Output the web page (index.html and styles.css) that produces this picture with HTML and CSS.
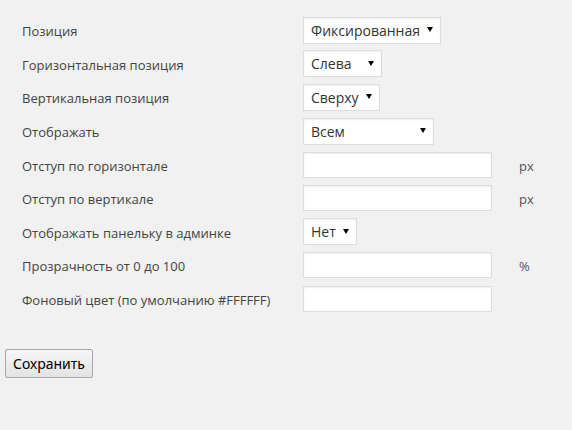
FILE: index.html
```
<!DOCTYPE html>
<html lang="ru">
<head>
<meta charset="utf-8">
<link rel="stylesheet" href="styles.css">
</head>
<body>
<form class="page">
  <div class="form-grid">
    <label class="lbl">Позиция</label>
    <div class="ctl"><span class="sel w138">Фиксированная</span></div>
    <span class="unit"></span>

    <label class="lbl">Горизонтальная позиция</label>
    <div class="ctl"><span class="sel w79">Слева</span></div>
    <span class="unit"></span>

    <label class="lbl">Вертикальная позиция</label>
    <div class="ctl"><span class="sel w77">Сверху</span></div>
    <span class="unit"></span>

    <label class="lbl">Отображать</label>
    <div class="ctl"><span class="sel w131">Всем</span></div>
    <span class="unit"></span>

    <label class="lbl">Отступ по горизонтале</label>
    <div class="ctl"><input class="txt" type="text"></div>
    <span class="unit">px</span>

    <label class="lbl">Отступ по вертикале</label>
    <div class="ctl"><input class="txt" type="text"></div>
    <span class="unit">px</span>

    <label class="lbl">Отображать панельку в админке</label>
    <div class="ctl"><span class="sel w54">Нет</span></div>
    <span class="unit"></span>

    <label class="lbl">Прозрачность от 0 до 100</label>
    <div class="ctl"><input class="txt" type="text"></div>
    <span class="unit">%</span>

    <label class="lbl">Фоновый цвет (по умолчанию #FFFFFF)</label>
    <div class="ctl"><input class="txt" type="text"></div>
    <span class="unit"></span>
  </div>
  <div class="actions">
    <button class="btn" type="button">Сохранить</button>
  </div>
</form>
</body>
</html>
```
FILE: styles.css
```
html, body {
  margin: 0;
  padding: 0;
  background: #f1f1f1;
}
body {
  font-family: "Open Sans", "Noto Sans", sans-serif;
  font-size: 13px;
  color: #444;
  width: 572px;
  height: 430px;
  overflow: hidden;
}
.page {
  padding: 17px 0 0 0;
}
.form-grid {
  display: grid;
  grid-template-columns: 303px 216px auto;
  grid-auto-rows: 26.6px;
  row-gap: 7px;
  align-items: center;
}
.lbl {
  padding: 2px 0 0 22px;
  line-height: 18px;
}
.ctl {
  display: flex;
  align-items: center;
  height: 100%;
}
.sel {
  position: relative;
  box-sizing: border-box;
  height: 27px;
  display: flex;
  align-items: center;
  padding-left: 7px;
  background: #fff;
  border: 1px solid #ddd;
  box-shadow: inset 0 1px 2px rgba(0,0,0,0.07);
  font-size: 14px;
  color: #333;
}
.sel::after {
  content: "";
  position: absolute;
  right: 7px;
  top: 50%;
  margin-top: -3px;
  border-left: 3px solid transparent;
  border-right: 3px solid transparent;
  border-top: 5px solid #000;
}
.w138 { width: 138px; }
.w79 { width: 79px; }
.w77 { width: 77px; }
.w131 { width: 131px; }
.w54 { width: 54px; }
.txt {
  box-sizing: border-box;
  width: 189px;
  height: 26px;
  margin: 0;
  background: #fff;
  border: 1px solid #ddd;
  box-shadow: inset 0 1px 2px rgba(0,0,0,0.07);
  outline: none;
}
.unit {
  padding-top: 2px;
  line-height: 18px;
  font-size: 13px;
  color: #555;
}
.actions {
  padding: 37px 0 0 5px;
}
.btn {
  box-sizing: border-box;
  height: 29px;
  width: 88px;
  padding: 0 6px;
  font-family: "Noto Sans", "Open Sans", sans-serif;
  font-size: 14px;
  color: #000;
  background: linear-gradient(#f6f6f6, #e3e3e3);
  border: 1px solid #a8a8a8;
  border-radius: 2px;
}
```
